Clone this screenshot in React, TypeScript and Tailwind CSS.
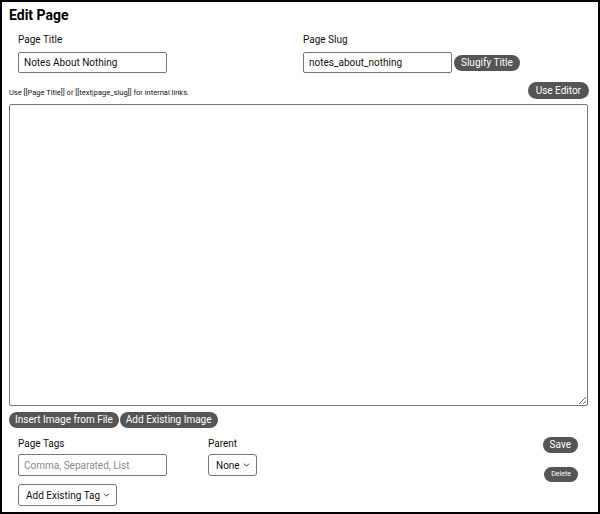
const Chevron = () => (
  <svg width="7" height="5" viewBox="0 0 7 5" className="absolute right-[7px] top-1/2 -translate-y-1/2 pointer-events-none">
    <path d="M1 1.2 L3.5 3.7 L6 1.2" fill="none" stroke="#333" strokeWidth="1" />
  </svg>
);

const Pill = ({ label, className = '' }: { label: string; className?: string }) => (
  <button
    type="button"
    className={`rounded-full bg-[#555555] text-white leading-none ${className}`}
  >
    {label}
  </button>
);

const App = () => {
  return (
    <div className="w-[600px] h-[514px] box-border border-2 border-black bg-white text-[#111] font-['Roboto',sans-serif] overflow-hidden">
      <div className="px-[7px]">
        <h1 className="text-[14px] font-bold leading-[20px] pt-[3px] text-black">Edit Page</h1>

        {/* Title and slug */}
        <div className="flex mt-[9px]">
          <div className="ml-[9px] w-[285px]">
            <label className="block text-[10px] leading-[12px] mb-[6px]">Page Title</label>
            <input
              defaultValue="Notes About Nothing"
              className="block w-[149px] h-[21px] box-border border border-[#767676] rounded-[2px] px-[5px] text-[10px] outline-none"
            />
          </div>
          <div>
            <label className="block text-[10px] leading-[12px] mb-[6px]">Page Slug</label>
            <div className="flex items-center gap-[2px]">
              <input
                defaultValue="notes_about_nothing"
                className="block w-[149px] h-[21px] box-border border border-[#767676] rounded-[2px] px-[5px] text-[10px] outline-none"
              />
              <Pill label="Slugify Title" className="h-[16px] text-[10px] px-[7px]" />
            </div>
          </div>
        </div>

        {/* Help + editor toggle */}
        <div className="flex items-end justify-between mt-[9px]">
          <p className="text-[7.5px] leading-[9px] mb-[2px]">
            Use [[Page Title]] or [[text|page_slug]] for internal links.
          </p>
          <Pill label="Use Editor" className="h-[17px] text-[10px] mr-[2px] px-[8px]" />
        </div>

        <textarea className="block w-[579px] h-[302px] box-border border border-[#767676] rounded-[2px] mt-[5px] outline-none resize" />

        <div className="flex gap-[1px] mt-[6px]">
          <Pill label="Insert Image from File" className="h-[16px] text-[10px] px-[6px]" />
          <Pill label="Add Existing Image" className="h-[16px] text-[10px] px-[6px]" />
        </div>

        {/* Tags, parent, actions */}
        <div className="flex mt-[10px]">
          <div className="ml-[9px] w-[190px]">
            <label className="block text-[10px] leading-[12px] mb-[4px]">Page Tags</label>
            <input
              placeholder="Comma, Separated, List"
              className="block w-[149px] h-[22px] box-border border border-[#767676] rounded-[2px] px-[5px] text-[10px] outline-none placeholder:text-[#8a8a8a]"
            />
            <div className="relative w-[99px] mt-[8px]">
              <select className="block appearance-none w-full h-[22px] box-border border border-[#767676] rounded-[3px] pl-[7px] text-[10px] bg-white outline-none">
                <option>Add Existing Tag</option>
              </select>
              <Chevron />
            </div>
          </div>
          <div>
            <label className="block text-[10px] leading-[12px] mb-[4px]">Parent</label>
            <div className="relative w-[49px]">
              <select className="block appearance-none w-full h-[22px] box-border border border-[#767676] rounded-[3px] pl-[7px] text-[10px] bg-white outline-none">
                <option>None</option>
              </select>
              <Chevron />
            </div>
          </div>
          <div className="ml-auto mr-[13px] flex flex-col items-end gap-[14px] -mt-[1px]">
            <Pill label="Save" className="h-[16px] text-[10px] px-[7px]" />
            <Pill label="Delete" className="h-[15px] text-[7px] px-[7px]" />
          </div>
        </div>
      </div>
    </div>
  );
};

export default App;
